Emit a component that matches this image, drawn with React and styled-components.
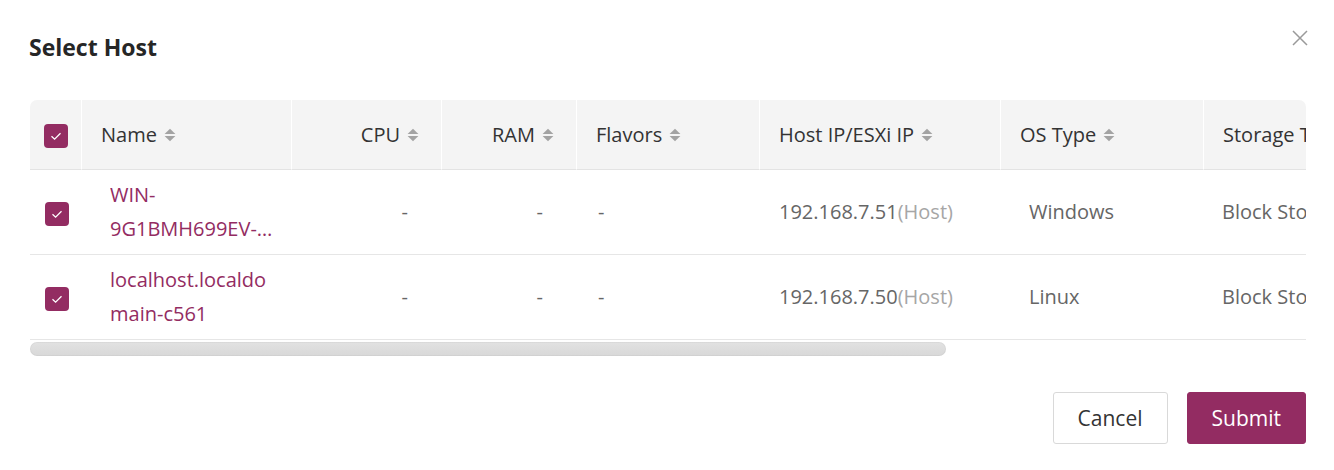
import styled, { createGlobalStyle } from "styled-components";

const GlobalStyle = createGlobalStyle`
  * { box-sizing: border-box; }
  body {
    margin: 0;
    background: #fff;
    font-family: "Open Sans", "Noto Sans", sans-serif;
    color: #333;
  }
`;

const VIEW_WIDTH = 1276;

const columns = [
  { key: "sel", width: 52 },
  { key: "name", title: "Name", width: 210 },
  { key: "cpu", title: "CPU", width: 150, align: "right" },
  { key: "ram", title: "RAM", width: 135, align: "right" },
  { key: "flavors", title: "Flavors", width: 183 },
  { key: "ip", title: "Host IP/ESXi IP", width: 241 },
  { key: "os", title: "OS Type", width: 203 },
  { key: "storage", title: "Storage Type", width: 200 },
  { key: "status", title: "Status", width: 200 },
  { key: "desc", title: "Description", width: 204 },
];

const tableWidth = columns.reduce((s, c) => s + c.width, 0);

const hosts = [
  { name: "WIN-9G1BMH699EV-STORAGE01", ip: "192.168.7.51", os: "Windows", storage: "Block Storage", status: "Online", desc: "-" },
  { name: "localhost.localdomain-c561", ip: "192.168.7.50", os: "Linux", storage: "Block Storage", status: "Online", desc: "-" },
];

function Checkbox() {
  return (
    <Box>
      <svg width="24" height="24" viewBox="0 0 24 24">
        <polyline points="7.5,12.2 10.6,15.2 16.5,9.3" fill="none" stroke="#fff" strokeWidth="1.3" />
      </svg>
    </Box>
  );
}

function SortIcon() {
  return (
    <Sorter width="12" height="14" viewBox="0 0 12 14">
      <path d="M6 0.8 L11.4 6 H0.6 Z" fill="#a3a3a3" />
      <path d="M0.6 8 H11.4 L6 13.2 Z" fill="#a3a3a3" />
    </Sorter>
  );
}

export default function App() {
  const thumbWidth = Math.round((VIEW_WIDTH / tableWidth) * VIEW_WIDTH);
  return (
    <>
      <GlobalStyle />
      <Dialog>
        <Header>
          <Title>Select Host</Title>
          <Close aria-label="close">
            <svg width="16" height="16" viewBox="0 0 16 16">
              <path d="M1 1 L15 15 M15 1 L1 15" stroke="#9a9a9a" strokeWidth="1.5" />
            </svg>
          </Close>
        </Header>

        <Scroller>
          <Table style={{ width: tableWidth }}>
            <colgroup>
              {columns.map((c) => (
                <col key={c.key} style={{ width: c.width }} />
              ))}
            </colgroup>
            <thead>
              <tr>
                {columns.map((c) => (
                  <HeadCell key={c.key} $align={c.align} $center={c.key === "sel"}>
                    {c.key === "sel" ? (
                      <Checkbox />
                    ) : (
                      <HeadLabel>
                        {c.title}
                        {["name", "cpu", "ram", "flavors", "ip", "os"].includes(c.key) && <SortIcon />}
                      </HeadLabel>
                    )}
                  </HeadCell>
                ))}
              </tr>
            </thead>
            <tbody>
              {hosts.map((h) => (
                <tr key={h.ip}>
                  <Cell $center>
                    <Checkbox />
                  </Cell>
                  <Cell $pl={28} $pr={14}>
                    <NameLink>{h.name}</NameLink>
                  </Cell>
                  <Cell $align="right" $pr={34}>-</Cell>
                  <Cell $align="right" $pr={34}>-</Cell>
                  <Cell $pl={21}>-</Cell>
                  <Cell>
                    {h.ip}
                    <Muted>(Host)</Muted>
                  </Cell>
                  <Cell $pl={28}>{h.os}</Cell>
                  <Cell $pl={18}>{h.storage}</Cell>
                  <Cell>{h.status}</Cell>
                  <Cell>{h.desc}</Cell>
                </tr>
              ))}
            </tbody>
          </Table>
        </Scroller>
        <ScrollTrack>
          <ScrollThumb style={{ width: thumbWidth }} />
        </ScrollTrack>

        <Footer>
          <Button>Cancel</Button>
          <Button $primary>Submit</Button>
        </Footer>
      </Dialog>
    </>
  );
}

const Dialog = styled.div`
  width: 1334px;
  padding: 31px 28px 27px 30px;
`;

const Header = styled.div`
  display: flex;
  align-items: flex-start;
  justify-content: space-between;
`;

const Title = styled.h2`
  margin: 0 0 0 -1px;
  font-size: 23px;
  line-height: 32px;
  font-weight: 700;
  color: #262626;
`;

const Close = styled.button`
  display: flex;
  margin: -1px -2px 0 0;
  padding: 0;
  border: none;
  background: none;
  cursor: pointer;
`;

const Scroller = styled.div`
  margin-top: 37px;
  overflow: hidden;
  border-radius: 7px 7px 0 0;
`;

const ScrollTrack = styled.div`
  height: 18px;
  padding: 2px 0;
`;

const ScrollThumb = styled.div`
  height: 14px;
  border-radius: 7px;
  background: linear-gradient(#e2e2e2, #d8d8d8);
  box-shadow: inset 0 0 0 1px rgba(0, 0, 0, 0.03);
`;

const Table = styled.table`
  table-layout: fixed;
  border-collapse: separate;
  border-spacing: 0;
  font-size: 20px;
`;

const HeadCell = styled.th`
  height: 70px;
  padding: 0 ${(p) => (p.$align === "right" ? "22px" : "0")} 0 ${(p) => (p.$center ? "0" : "19px")};
  background: #f4f4f4;
  border-right: 1px solid #fff;
  border-bottom: 1px solid #e3e3e3;
  text-align: ${(p) => (p.$center ? "center" : p.$align || "left")};
  font-weight: 400;
  color: #333;
  white-space: nowrap;
  overflow: hidden;
  vertical-align: middle;
`;

const HeadLabel = styled.span`
  display: inline-flex;
  align-items: center;
  gap: 7px;
`;

const Sorter = styled.svg`
  flex: none;
`;

const Cell = styled.td`
  height: 85px;
  padding: 8px ${(p) => (p.$center ? 0 : p.$pr != null ? p.$pr : 16)}px 8px
    ${(p) => (p.$center ? 0 : p.$pl != null ? p.$pl : 19)}px;
  border-bottom: 1px solid #e6e6e6;
  text-align: ${(p) => (p.$center ? "center" : p.$align || "left")};
  line-height: 34px;
  color: #666;
  white-space: nowrap;
  overflow: hidden;
  vertical-align: middle;
`;

const NameLink = styled.a`
  display: -webkit-box;
  -webkit-box-orient: vertical;
  -webkit-line-clamp: 2;
  overflow: hidden;
  white-space: normal;
  overflow-wrap: anywhere;
  color: #932c62;
  cursor: pointer;
`;

const Muted = styled.span`
  color: #a6a6a6;
`;

const Box = styled.span`
  display: inline-flex;
  width: 24px;
  height: 24px;
  border-radius: 4px;
  background: #932c62;
  vertical-align: middle;
  margin-left: 1px;
`;

const Footer = styled.div`
  display: flex;
  justify-content: flex-end;
  gap: 19px;
  margin-top: 34px;
`;

const Button = styled.button`
  height: 52px;
  padding: 0 24px;
  border-radius: 3px;
  border: 1px solid ${(p) => (p.$primary ? "#932c62" : "#d9d9d9")};
  background: ${(p) => (p.$primary ? "#932c62" : "#fff")};
  color: ${(p) => (p.$primary ? "#fff" : "#333")};
  font-family: "Open Sans", "Noto Sans", sans-serif;
  font-size: 21px;
  cursor: pointer;
`;
